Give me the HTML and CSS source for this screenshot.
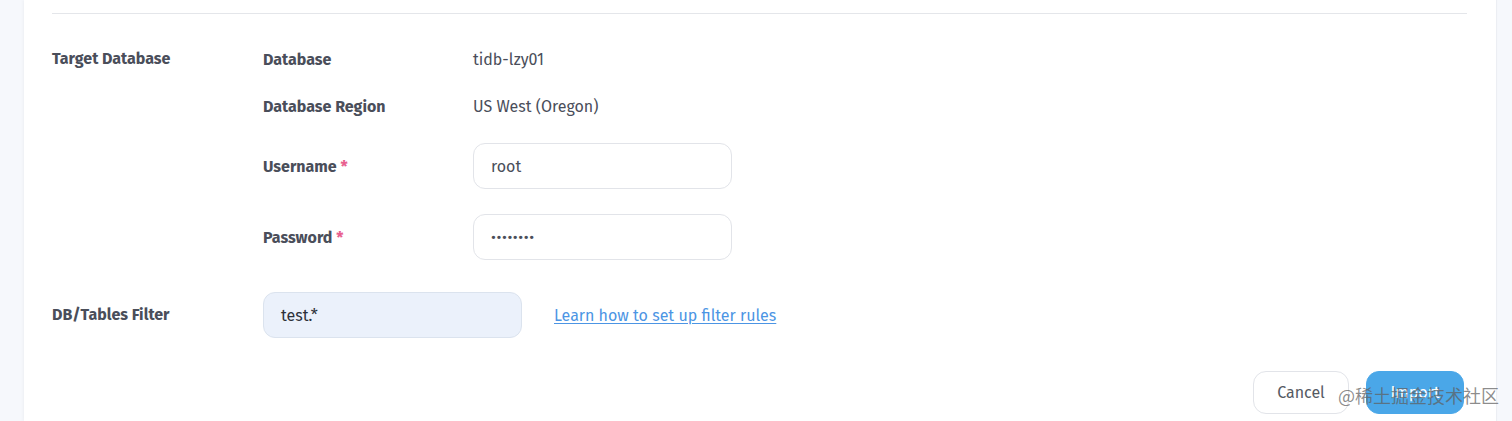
FILE: index.html
```html
<!DOCTYPE html>
<html lang="en">
<head>
<meta charset="utf-8">
<title>Target Database</title>
<link rel="stylesheet" href="styles.css">
</head>
<body>
<div class="card">
  <div class="divider"></div>
  <div class="section target">
    <div class="section-label">Target Database</div>
    <div class="fields">
      <div class="field text-row">
        <div class="field-label">Database</div>
        <div class="field-value">tidb-lzy01</div>
      </div>
      <div class="field text-row">
        <div class="field-label">Database Region</div>
        <div class="field-value">US West (Oregon)</div>
      </div>
      <div class="field input-row first-input">
        <div class="field-label">Username <span class="req">*</span></div>
        <div class="input">root</div>
      </div>
      <div class="field input-row">
        <div class="field-label">Password <span class="req">*</span></div>
        <div class="input pw">••••••••</div>
      </div>
    </div>
  </div>
  <div class="section filter">
    <div class="section-label">DB/Tables Filter</div>
    <div class="filter-body">
      <div class="input filled">test.*</div>
      <a class="link" href="#">Learn how to set up filter rules</a>
    </div>
  </div>
  <div class="actions">
    <button class="btn btn-cancel">Cancel</button>
    <button class="btn btn-primary">Import</button>
  </div>
</div>
<div class="watermark">@稀土掘金技术社区</div>
</body>
</html>
```
FILE: styles.css
```css
html, body {
  margin: 0;
  padding: 0;
}
body {
  background: #f6f8fc;
  font-family: "Fira Sans", Lato, "Noto Sans", sans-serif;
  height: 421px;
  overflow: hidden;
  position: relative;
}
.card {
  margin-left: 24px;
  width: 1473px;
  height: 421px;
  box-sizing: border-box;
  background: #ffffff;
  border-right: 1px solid #eceef3;
  box-shadow: -1px 0 3px rgba(0, 0, 0, 0.04);
  padding: 13px 29px 0 28px;
}
.divider {
  height: 1px;
  background: #e4e6ea;
}
.section {
  display: flex;
}
.section-label {
  width: 211px;
  flex: none;
  font-weight: 700;
  font-size: 16px;
  line-height: 22px;
  color: #4a4e5a;
}
.target {
  padding-top: 34px;
}
.fields {
  display: flex;
  flex-direction: column;
  gap: 25px;
}
.field {
  display: flex;
  align-items: center;
}
.text-row {
  height: 22px;
}
.input-row {
  height: 46px;
}
.first-input {
  margin-top: 1px;
}
.field-label {
  width: 210px;
  flex: none;
  font-weight: 700;
  font-size: 16px;
  color: #4a4e5a;
}
.req {
  color: #e8608f;
}
.field-value {
  font-size: 16px;
  color: #4a4e5a;
}
.input {
  width: 259px;
  height: 46px;
  box-sizing: border-box;
  border: 1px solid #e2e4e9;
  border-radius: 12px;
  padding: 0 17px;
  display: flex;
  align-items: center;
  font-size: 16px;
  color: #4a4e5a;
  background: #ffffff;
}
.input.pw {
  font-size: 15px;
  letter-spacing: 0.6px;
}
.filter {
  margin-top: 32px;
  align-items: center;
}
.filter-body {
  display: flex;
  align-items: center;
  gap: 32px;
}
.input.filled {
  background: #ebf1fb;
  border-color: #dbe3ee;
  color: #2c3038;
}
.link {
  font-size: 16px;
  color: #4c95e4;
  text-decoration: underline;
  text-underline-offset: 2px;
}
.actions {
  margin-top: 33px;
  display: flex;
  justify-content: flex-end;
  gap: 17px;
  padding-right: 3px;
}
.btn {
  height: 43px;
  border-radius: 13px;
  font-family: inherit;
  font-size: 16px;
  cursor: pointer;
}
.btn-cancel {
  width: 96px;
  background: #ffffff;
  border: 1px solid #e2e4e9;
  color: #555a63;
}
.btn-primary {
  width: 98px;
  background: #4aa7e8;
  border: 1px solid #4aa7e8;
  color: #ffffff;
}
.watermark {
  position: absolute;
  left: 1338px;
  top: 382px;
  font-family: "Noto Sans CJK SC", sans-serif;
  font-size: 18px;
  line-height: 26px;
  color: rgba(95, 95, 95, 0.72);
  white-space: nowrap;
}
```
